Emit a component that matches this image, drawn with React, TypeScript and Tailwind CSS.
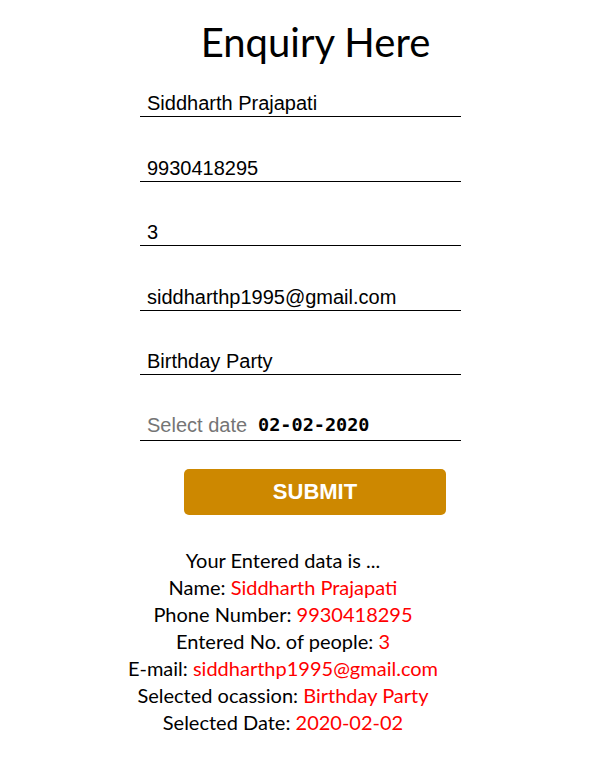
import React from "react";

const fields = [
  "Siddharth Prajapati",
  "9930418295",
  "3",
  "siddharthp1995@gmail.com",
  "Birthday Party",
];

const summary: [string, string][] = [
  ["Name: ", "Siddharth Prajapati"],
  ["Phone Number: ", "9930418295"],
  ["Entered No. of people: ", "3"],
  ["E-mail: ", "siddharthp1995@gmail.com"],
  ["Selected ocassion: ", "Birthday Party"],
  ["Selected Date: ", "2020-02-02"],
];

export default function App() {
  return (
    <div className="w-[606px] h-[759px] bg-white text-black font-['Lato',sans-serif]">
      <div className="pt-[15px] pl-[25px] text-center text-[40px] leading-[54px]">Enquiry Here</div>
      <div className="ml-[140px] w-[321px] flex flex-col pt-[6px]">
        {fields.map((f, i) => (
          <div
            key={i}
            className={`border-b border-black h-[42px] flex items-end pl-[7px] pb-[1px] font-['Liberation_Sans',Arial,sans-serif] text-[20px] leading-[24px] ${i === 0 ? "" : "mt-[22.6px]"}`}
          >
            {f}
          </div>
        ))}
        <div className="border-b border-black h-[43px] mt-[22.6px] flex items-end pl-[7px] pb-[3px]">
          <span className="font-['Liberation_Sans',Arial,sans-serif] text-[20px] leading-[24px] text-[#757575]">Select date</span>
          <span className="ml-[11px] font-['DejaVu_Sans_Mono',monospace] font-semibold text-[18.5px] leading-[24px]">02-02-2020</span>
        </div>
      </div>
      <div className="ml-[184px] mt-[28px] w-[262px] h-[46px] rounded-[5px] bg-[#cd8800] flex items-center justify-center text-white font-bold text-[22px] font-['Liberation_Sans',Arial,sans-serif]">
        SUBMIT
      </div>
      <div className="mt-[32px] pr-[40px] text-center text-[20px] leading-[27px]">
        <div>Your Entered data is ...</div>
        {summary.map(([k, v], i) => (
          <div key={i}>
            {k}
            <span className="text-[#ff0000]">{v}</span>
          </div>
        ))}
      </div>
    </div>
  );
}
